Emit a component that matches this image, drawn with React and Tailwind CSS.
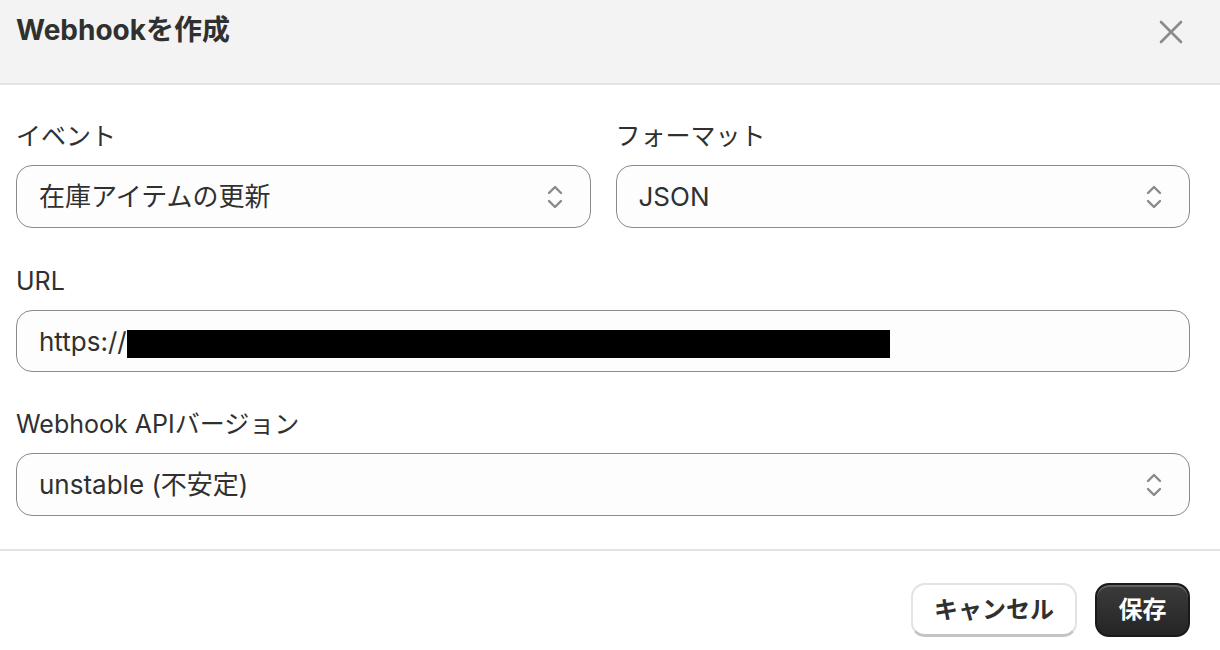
import React from 'react';

const font = { fontFamily: 'Inter, "Noto Sans CJK JP", sans-serif' };

function Chevrons() {
  return (
    <svg width="20" height="28" viewBox="0 0 20 28" fill="none" className="shrink-0">
      <path d="M4 10 L10 4 L16 10" stroke="#8a8a8a" strokeWidth="2.4" strokeLinecap="round" strokeLinejoin="round" />
      <path d="M4 18 L10 24 L16 18" stroke="#8a8a8a" strokeWidth="2.4" strokeLinecap="round" strokeLinejoin="round" />
    </svg>
  );
}

function Field({ label, children, className = '' }) {
  return (
    <div className={`flex flex-col ${className}`}>
      <label className="text-[25px] leading-8 text-[#303030] mb-[13px]">{label}</label>
      {children}
    </div>
  );
}

function SelectBox({ value }) {
  return (
    <div className="h-[63px] flex items-center justify-between pl-[22px] pr-[25px] rounded-[16px] border-[1.5px] border-[#8a8a8a] bg-[#fdfdfd]">
      <span className="text-[26px] text-[#303030]">{value}</span>
      <Chevrons />
    </div>
  );
}

export default function App() {
  return (
    <div className="w-[1220px] h-[650px] bg-white overflow-hidden" style={font}>
      <div className="h-[85px] bg-[#f3f3f3] border-b-2 border-[#e3e3e3] flex items-start justify-between pl-4 pr-[36px] pt-[12px]">
        <h1 className="text-[28px] leading-9 font-bold text-[#303030]">Webhookを作成</h1>
        <button className="mt-[7px]">
          <svg width="26" height="26" viewBox="0 0 26 26" fill="none">
            <path d="M3 3 L23 23 M23 3 L3 23" stroke="#8a8a8a" strokeWidth="2.6" strokeLinecap="round" />
          </svg>
        </button>
      </div>

      <div className="pl-4 pr-[30px] pt-[35px] pb-[33px] border-b-2 border-[#e3e3e3]">
        <div className="grid grid-cols-2 gap-[25px]">
          <Field label="イベント">
            <SelectBox value="在庫アイテムの更新" />
          </Field>
          <Field label="フォーマット">
            <SelectBox value="JSON" />
          </Field>
        </div>

        <Field label="URL" className="mt-[37px]">
          <div className="h-[62px] flex items-center pl-[22px] rounded-[16px] border-[1.5px] border-[#8a8a8a] bg-[#fdfdfd]">
            <span className="text-[26px] text-[#303030]">https://</span>
            <span className="block w-[763px] h-[28px] mt-[5px] bg-black" />
          </div>
        </Field>

        <Field label="Webhook APIバージョン" className="mt-[36px]">
          <SelectBox value="unstable (不安定)" />
        </Field>
      </div>

      <div className="flex justify-end gap-[18px] px-[30px] pt-[32px]">
        <button className="h-[54px] w-[166px] rounded-[14px] bg-white border-2 border-[#e3e3e3] border-b-[3px] border-b-[#c4c4c4] text-[24px] font-bold text-[#303030]">
          キャンセル
        </button>
        <button className="h-[54px] w-[95px] rounded-[14px] bg-gradient-to-b from-[#3b3b3b] to-[#252525] border-2 border-[#1a1a1a] shadow-[inset_0_2px_0_rgba(255,255,255,0.2)] text-[24px] font-bold text-white">
          保存
        </button>
      </div>
    </div>
  );
}
